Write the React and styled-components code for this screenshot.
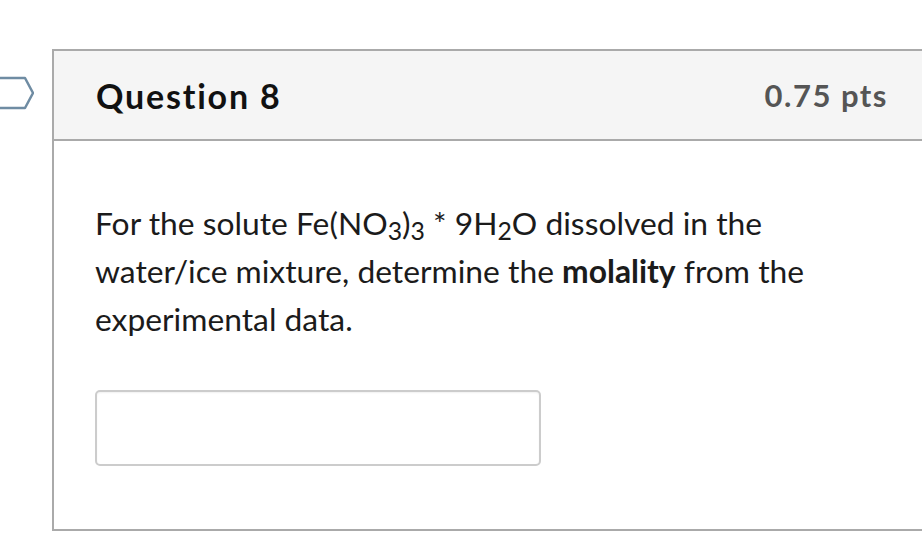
import styled, { createGlobalStyle } from 'styled-components';

const GlobalStyle = createGlobalStyle`
  html, body {
    margin: 0;
    padding: 0;
    background: #fff;
    overflow: hidden;
  }
  body {
    font-family: Lato, "Open Sans", sans-serif;
    color: #1b1b1b;
  }
`;

const Page = styled.div`
  display: flex;
  align-items: flex-start;
  padding-top: 49px;
  width: 922px;
  height: 556px;
  box-sizing: border-box;
`;

const MarkerColumn = styled.div`
  width: 52px;
  flex-shrink: 0;
  padding-top: 27px;
  overflow: hidden;
`;

const Card = styled.div`
  width: 880px;
  flex-shrink: 0;
  border: 2px solid #aaaaaa;
  border-right: none;
  box-sizing: border-box;
`;

const Header = styled.div`
  display: flex;
  align-items: center;
  justify-content: space-between;
  height: 88px;
  padding: 0 44px 0 42px;
  background: #f5f5f5;
  border-bottom: 2px solid #aaaaaa;
`;

const Title = styled.h2`
  margin: 0;
  font-size: 34px;
  font-weight: 700;
  letter-spacing: 1.8px;
  color: #111;
`;

const Points = styled.span`
  font-size: 31px;
  font-weight: 700;
  letter-spacing: 1.5px;
  color: #555;
`;

const Body = styled.div`
  padding: 58px 41px 63px 41px;
`;

const Text = styled.p`
  margin: 0;
  width: 740px;
  font-size: 31.8px;
  line-height: 48px;
`;

const Sub = styled.sub`
  font-size: 0.78em;
  line-height: 0;
  vertical-align: -0.2em;
`;

const AnswerInput = styled.input`
  display: block;
  margin-top: 47px;
  width: 446px;
  height: 76px;
  box-sizing: border-box;
  border: 2px solid #cccccc;
  border-radius: 5px;
  background: #fff;
  box-shadow: inset 0 1px 2px rgba(0, 0, 0, 0.06);
  font-family: inherit;
  font-size: 24px;
  padding: 0 14px;
  outline: none;
`;

const Marker = () => (
  <svg width="40" height="34" viewBox="0 0 40 34" style={{ marginLeft: -6 }}>
    <path
      d="M1 2 H31 L39 17 L31 32 H1 Z"
      fill="none"
      stroke="#6f8ca3"
      strokeWidth="2.5"
      strokeLinejoin="round"
    />
  </svg>
);

export default function App() {
  return (
    <>
      <GlobalStyle />
      <Page>
        <MarkerColumn>
          <Marker />
        </MarkerColumn>
        <Card>
          <Header>
            <Title>Question 8</Title>
            <Points>0.75 pts</Points>
          </Header>
          <Body>
            <Text>
              For the solute Fe(NO<Sub>3</Sub>)<Sub>3</Sub> * 9H<Sub>2</Sub>O dissolved in the
              water/ice mixture, determine the <strong>molality</strong> from the experimental
              data.
            </Text>
            <AnswerInput type="text" />
          </Body>
        </Card>
      </Page>
    </>
  );
}
